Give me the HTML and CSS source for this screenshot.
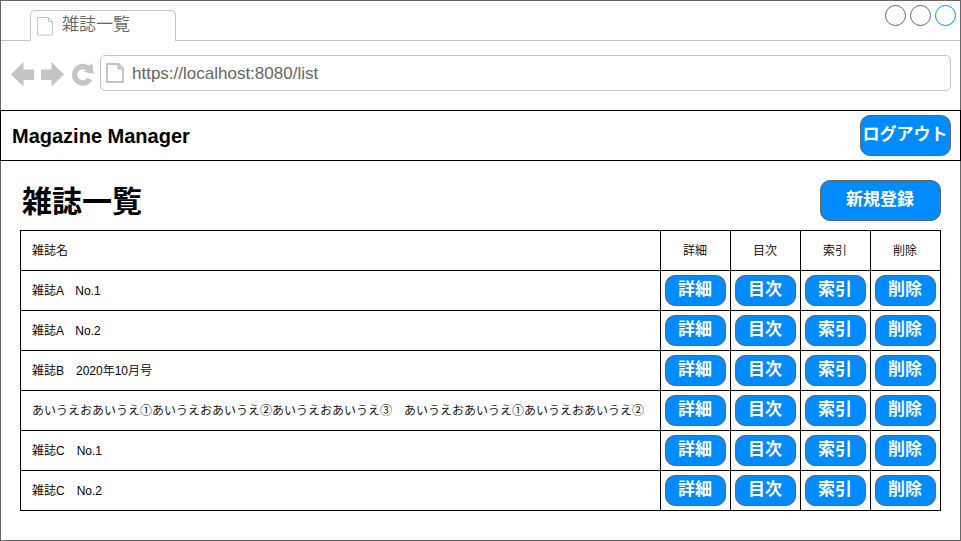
FILE: index.html
```html
<!DOCTYPE html>
<html lang="ja">
<head>
<meta charset="utf-8">
<title>雑誌一覧</title>
<link rel="stylesheet" href="styles.css">
</head>
<body>
<div class="window">
  <div class="tabs">
    <div class="tab">
      <svg class="tab-icon" width="18" height="21" viewBox="0 0 18 21"><path d="M1.500 1.500h11l4 4v13.500h-15zM12.500 1.500v4h4" fill="#fff" stroke="#c4c4c4"/></svg>
      <span class="tab-title">雑誌一覧</span>
    </div>
    <div class="controls">
      <span class="dot"></span><span class="dot"></span><span class="dot dot-active"></span>
    </div>
  </div>
  <div class="toolbar">
    <svg class="nav" width="88" height="30" viewBox="0 0 88 30" fill="#c4c4c4">
      <path d="M0 14.500L12.500 2V9.500H23V20H12.500V26.500Z"/>
      <path d="M53 14.500L40.500 2V9.500H30V20H40.500V26.500Z"/>
      <path d="M77.800 5.600A10.900 10.900 0 1 0 81.200 20.300L76.400 17.800A5.500 5.500 0 1 1 75.200 10.500L71.900 11.700L82.800 13.800L81.300 3.300Z"/>
    </svg>
    <div class="address">
      <svg class="address-icon" width="20" height="22" viewBox="0 0 20 22"><path d="M2 2h11.500l4.500 4.500v13.500h-16zM13.500 2v4.500h4.500" fill="#fff" stroke="#c4c4c4" stroke-width="2"/></svg>
      <span class="url">https://localhost:8080/list</span>
    </div>
  </div>
  <header class="header">
    <span class="brand">Magazine Manager</span>
    <a class="button logout"><span>ログアウト</span></a>
  </header>
  <main class="content">
    <div class="heading">
      <h1>雑誌一覧</h1>
      <a class="button create"><span>新規登録</span></a>
    </div>
    <table class="list">
      <colgroup><col><col class="action"><col class="action"><col class="action"><col class="action"></colgroup>
      <tr><th>雑誌名</th><th>詳細</th><th>目次</th><th>索引</th><th>削除</th></tr>
      <tr><td>雑誌A　No.1</td><td><a class="button"><span>詳細</span></a></td><td><a class="button"><span>目次</span></a></td><td><a class="button"><span>索引</span></a></td><td><a class="button"><span>削除</span></a></td></tr>
      <tr><td>雑誌A　No.2</td><td><a class="button"><span>詳細</span></a></td><td><a class="button"><span>目次</span></a></td><td><a class="button"><span>索引</span></a></td><td><a class="button"><span>削除</span></a></td></tr>
      <tr><td>雑誌B　2020年10月号</td><td><a class="button"><span>詳細</span></a></td><td><a class="button"><span>目次</span></a></td><td><a class="button"><span>索引</span></a></td><td><a class="button"><span>削除</span></a></td></tr>
      <tr><td>あいうえおあいうえ①あいうえおあいうえ②あいうえおあいうえ③　あいうえおあいうえ①あいうえおあいうえ②</td><td><a class="button"><span>詳細</span></a></td><td><a class="button"><span>目次</span></a></td><td><a class="button"><span>索引</span></a></td><td><a class="button"><span>削除</span></a></td></tr>
      <tr><td>雑誌C　No.1</td><td><a class="button"><span>詳細</span></a></td><td><a class="button"><span>目次</span></a></td><td><a class="button"><span>索引</span></a></td><td><a class="button"><span>削除</span></a></td></tr>
      <tr><td>雑誌C　No.2</td><td><a class="button"><span>詳細</span></a></td><td><a class="button"><span>目次</span></a></td><td><a class="button"><span>索引</span></a></td><td><a class="button"><span>削除</span></a></td></tr>
    </table>
  </main>
</div>
</body>
</html>
```
FILE: styles.css
```css
* { box-sizing: border-box; }

body {
  margin: 0;
  background: #fff;
  color: #000;
  font-family: "Liberation Sans", "Noto Sans CJK JP", sans-serif;
}

.window {
  width: 961px;
  height: 541px;
  border: 1px solid #666;
}

.tabs {
  display: flex;
  justify-content: space-between;
  height: 40px;
  padding: 4px 4px 0 29px;
  border-bottom: 1px solid #c4c4c4;
}

.tab {
  display: flex;
  width: 146px;
  height: 31px;
  margin-top: 5px;
  padding: 5px 0 0 5px;
  border: 1px solid #c4c4c4;
  border-bottom: 0;
  border-radius: 5px 5px 0 0;
  background: #fff;
}

.tab-title {
  margin: -3px 0 0 8px;
  color: #666;
  font-size: 17px;
  font-weight: 350;
  line-height: 24px;
}

.controls { display: flex; gap: 4px; }

.dot {
  width: 21px;
  height: 21px;
  border: 1px solid #666;
  border-radius: 50%;
}

.dot-active { border-color: #008cff; }

.toolbar {
  display: flex;
  height: 69px;
  padding: 14px 9px 0 10px;
}

.nav { margin-top: 5px; }

.address {
  display: flex;
  align-items: center;
  gap: 7px;
  width: 851px;
  height: 36px;
  margin-left: 1px;
  padding-left: 4px;
  border: 1px solid #c4c4c4;
  border-radius: 5px;
  color: #666;
  font-size: 17px;
}

.url { padding-top: 2px; }

.header {
  display: flex;
  justify-content: space-between;
  align-items: center;
  height: 51px;
  margin: 0 -1px;
  padding: 0 9px 0 11px;
  border: 1px solid #000;
}

.brand {
  padding-top: 2px;
  font-size: 20px;
  font-weight: bold;
}

.button {
  display: flex;
  justify-content: center;
  align-items: center;
  width: 61px;
  height: 31px;
  border: 1px solid #666;
  border-radius: 10px;
  background: #008cff;
  color: #fff;
  font-size: 17px;
  font-weight: bold;
  line-height: 24px;
  white-space: nowrap;
}

.button span { margin: -1px 1px 0 0; }

.logout { width: 91px; height: 41px; }

.content { padding: 19px 19px 0; }

.heading {
  display: flex;
  justify-content: space-between;
  height: 50px;
}

h1 {
  margin: 1px 0 0 2px;
  font-size: 30px;
  line-height: 42px;
}

.create { width: 121px; height: 41px; }

.list {
  width: 921px;
  table-layout: fixed;
  border-spacing: 0;
  border: solid #000;
  border-width: 1px 0 0 1px;
}

.action { width: 70px; }

th, td {
  height: 40px;
  padding: 0 5px 0 4px;
  border: solid #000;
  border-width: 0 1px 1px 0;
  font-size: 12px;
  font-weight: 350;
  line-height: 18px;
  white-space: nowrap;
}

th:first-child, td:first-child { padding-left: 11px; text-align: left; }
```
